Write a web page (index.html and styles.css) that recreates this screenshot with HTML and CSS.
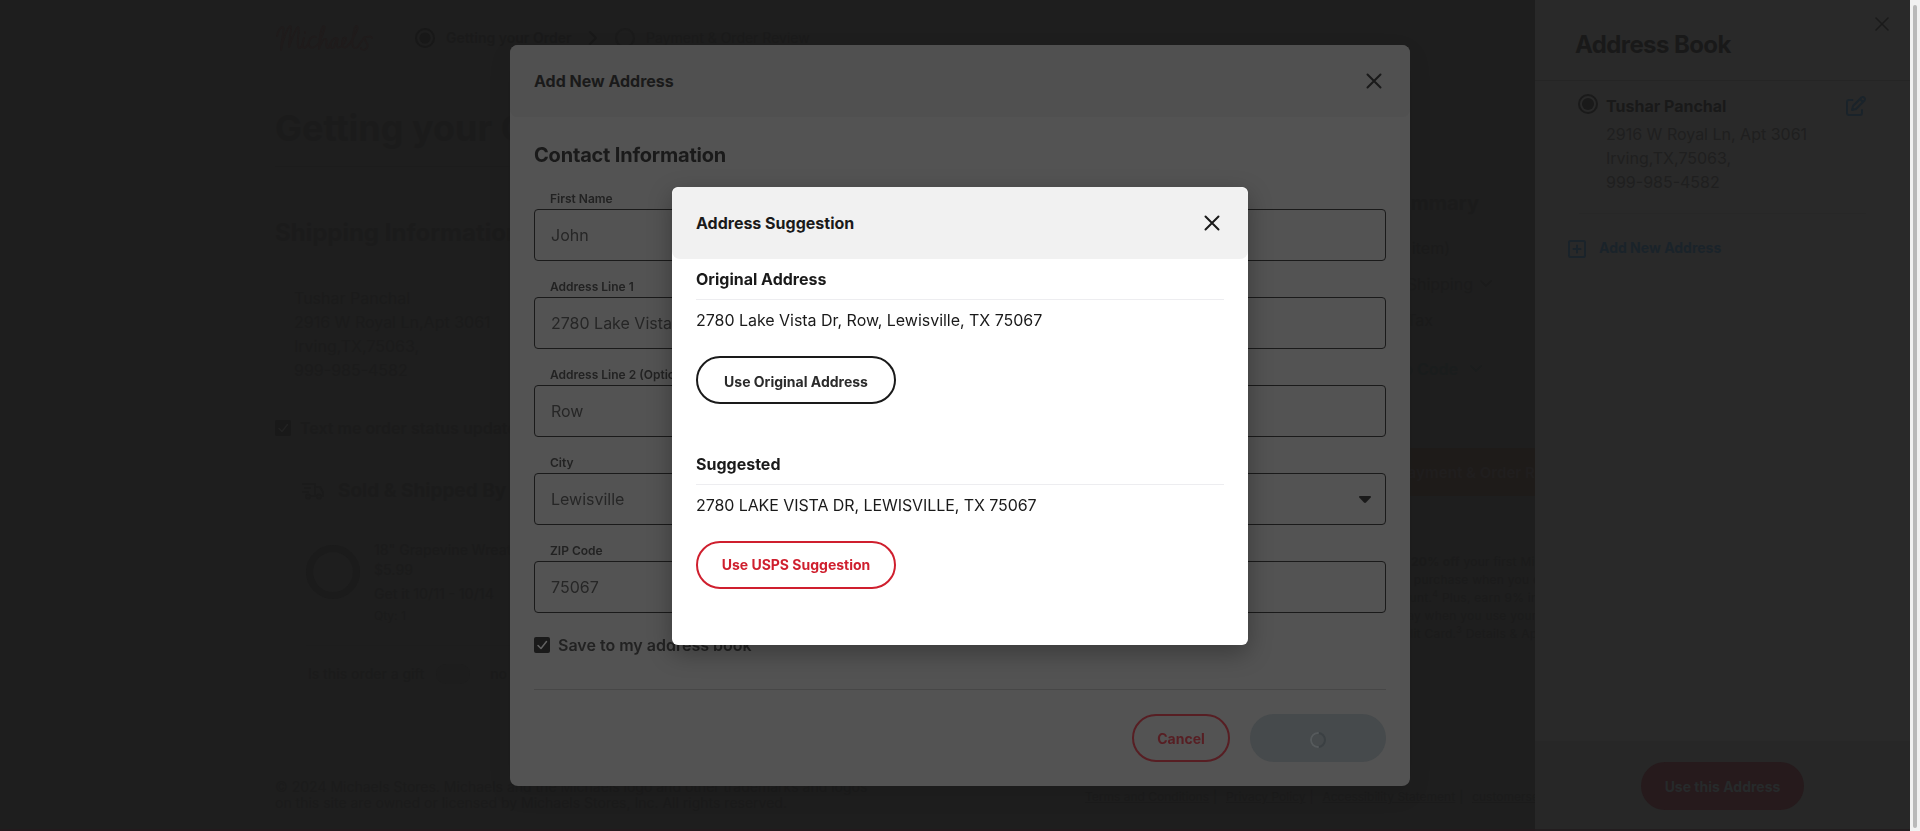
FILE: index.html
```html
<!DOCTYPE html>
<html lang="en">
<head>
<meta charset="utf-8">
<title>Michaels - Getting your Order</title>
<link rel="stylesheet" href="styles.css">
</head>
<body>
<div class="page">
  <header class="top">
    <svg class="logo" width="100" height="32" viewBox="0 0 100 32"><path d="M2 14C3 8 6 5 8 5C10 6 6 20 6 28C8 18 12 6 15 4C18 4 13 20 14 25C17 17 20 7 23 5C26 6 20 23 24 26C27 26 28 21 29 16C27 21 27 26 30 26C32 25 33 22 34 19M30 10V11M41 15C37 13 33 18 34 23C35 28 41 25 44 21C48 12 51 5 49 4C46 4 44 18 44 27C46 20 49 16 51 17C53 18 49 26 53 26C55 25 55 18 60 16C64 16 61 17 59 25C55 29 54 20 59 17M63 17C61 24 62 27 65 25C68 22 72 20 71 16C67 14 66 22 68 25C72 28 79 16 82 8C84 3 80 2 79 9C77 18 76 27 81 26C85 24 87 17 90 15C88 20 95 21 92 26C90 29 86 28 86 26M91 15C95 14 96 14 97 16"/></svg>
    <div class="step on"><svg width="20" height="20" viewBox="0 0 20 20"><circle cx="10" cy="10" r="9"/><circle class="solid" cx="10" cy="10" r="5.5"/></svg><span>Getting your Order</span></div>
    <svg class="next" width="10" height="16" viewBox="0 0 10 16"><path d="M2 2l6 6-6 6"/></svg>
    <div class="step"><svg width="20" height="20" viewBox="0 0 20 20"><circle cx="10" cy="10" r="9"/></svg><span>Payment &amp; Order Review</span></div>
  </header>
  <div class="columns">
    <main class="left">
      <h1>Getting your Order</h1>
      <h2>Shipping Information</h2>
      <div class="ship">Tushar Panchal<br>2916 W Royal Ln,Apt 3061<br>Irving,TX,75063,<br>999-985-4582</div>
      <div class="optin"><svg width="16" height="16" viewBox="0 0 16 16"><rect width="16" height="16" rx="2"/><path d="M4 8.500l3 3 5.500-7"/></svg><span>Text me order status updates</span></div>
      <div class="sold"><svg width="22" height="18" viewBox="0 0 22 18"><path d="M1 2h12v12H8M3 6h5M1 10h5M13 5h5l3 5v4h-2M15 14h-2"/><circle cx="6" cy="14.500" r="2"/><circle cx="17" cy="14.500" r="2"/></svg><span>Sold &amp; Shipped By</span></div>
      <div class="item"><div class="wreath"></div><div class="info"><b>18" Grapevine Wreath</b><b>$5.99</b><b class="get">Get it 10/11 - 10/14</b><small>Qty: 1</small></div></div>
      <div class="gift"><span>Is this order a gift</span><i class="toggle"></i><span>no</span></div>
    </main>
    <aside class="summary">
      <h3>Order Summary</h3>
      <div class="sum subtotal">Subtotal (1 item)</div>
      <div class="sum shipping">Estimated Shipping <svg width="12" height="8" viewBox="0 0 12 8"><path d="M1 1l5 5 5-5"/></svg></div>
      <div class="sum tax">Estimated Tax</div>
      <div class="sum promo">Add Promo Code <svg width="12" height="8" viewBox="0 0 12 8"><path d="M1 1l5 5 5-5"/></svg></div>
      <div class="pay">Payment &amp; Order Review</div>
      <div class="offer"><p><b>20% off</b> your first Michaels</p><p>Card purchase when you open</p><p>an account.<sup>4</sup> Plus, earn 9% in</p><p>every day when you use your</p><p>Credit Card.<sup>3</sup> <span>Details &amp; Apply</span></p></div>
    </aside>
  </div>
  <footer class="foot">
    <p>© 2024 Michaels Stores. Michaels and the Michaels logo and other trademarks and logos<br>on this site are owned or licensed by Michaels Stores, Inc. All rights reserved.</p>
    <nav><a>Terms and Conditions</a><i>|</i><a>Privacy Policy</a><i>|</i><a>Accessibility Statement</a><i>|</i><a>customerservice</a></nav>
  </footer>
</div>

<aside class="drawer">
  <div class="drawer-head"><h2>Address Book</h2><svg width="14" height="14" viewBox="0 0 14 14"><path d="M1 1l12 12M13 1L1 13"/></svg></div>
  <div class="entry">
    <svg class="radio" width="20" height="20" viewBox="0 0 20 20"><circle cx="10" cy="10" r="9"/><circle class="solid" cx="10" cy="10" r="6"/></svg>
    <div class="entry-text"><b>Tushar Panchal</b><span>2916 W Royal Ln, Apt 3061</span><span>Irving,TX,75063,</span><span>999-985-4582</span></div>
    <svg class="edit" width="20" height="20" viewBox="0 0 20 20"><path d="M6.500 4H3Q1 4 1 6v11q0 2 2 2h11q2 0 2-2v-3M6 14l1-4 8.500-8.500q1.500-1 2.800.2t.2 2.800L10 13zM14 3l3 3"/></svg>
  </div>
  <div class="add"><svg width="18" height="18" viewBox="0 0 18 18"><rect x="1" y="1" width="16" height="16" rx="1.500"/><path d="M9 5.500v7M5.500 9h7"/></svg><span>Add New Address</span></div>
  <div class="drawer-foot"><button>Use this Address</button></div>
</aside>

<section class="modal form-modal">
  <header><h2>Add New Address</h2><svg width="16" height="16" viewBox="0 0 16 16"><path d="M1.500 1.500l13 13M14.500 1.500l-13 13"/></svg></header>
  <div class="form">
    <h3>Contact Information</h3>
    <label>First Name</label><div class="input">John</div>
    <label>Address Line 1</label><div class="input">2780 Lake Vista</div>
    <label>Address Line 2 (Optional)</label><div class="input">Row</div>
    <label>City</label><div class="input select">Lewisville<svg width="12" height="7" viewBox="0 0 12 7"><path d="M1 0h10q1.500.3.700 1.400L7 6.500q-1 .8-2 0L.3 1.400Q-.5.300 1 0z"/></svg></div>
    <label>ZIP Code</label><div class="input">75067</div>
    <div class="save"><svg width="16" height="16" viewBox="0 0 16 16"><rect width="16" height="16" rx="2"/><path d="M4 8.500l3 3 5.500-7"/></svg><span>Save to my address book</span></div>
  </div>
  <div class="actions"><button class="cancel">Cancel</button><button class="busy"><svg width="18" height="18" viewBox="0 0 18 18"><circle cx="9" cy="9" r="7"/><path d="M9 2a7 7 0 0 0 0 14"/></svg></button></div>
</section>

<section class="modal suggest">
  <header><h2>Address Suggestion</h2><svg width="16" height="16" viewBox="0 0 16 16"><path d="M1.500 1.500l13 13M14.500 1.500l-13 13"/></svg></header>
  <div class="choice"><h3>Original Address</h3><p>2780 Lake Vista Dr, Row, Lewisville, TX 75067</p><button class="original">Use Original Address</button></div>
  <div class="choice second"><h3>Suggested</h3><p>2780 LAKE VISTA DR, LEWISVILLE, TX 75067</p><button class="usps">Use USPS Suggestion</button></div>
</section>
<div class="scrollbar"><i></i></div>
</body>
</html>
```
FILE: styles.css
```css
* { box-sizing: border-box; }
body { margin: 0; height: 831px; overflow: hidden; background: #1e1e1e; font: 16px/24px Inter, sans-serif; color: #1a1a1a; }
h1, h2, h3, p { margin: 0; }
svg { display: block; flex: none; fill: none; stroke: currentColor; stroke-width: 2; stroke-linecap: round; stroke-linejoin: round; }
button { font: 700 14px/20px Inter, sans-serif; border: 2px solid; border-radius: 24px; height: 48px; padding: 0; background: none; }
.solid { fill: currentColor; stroke: none; }

.page { width: 1910px; height: 831px; padding-left: 275px; border-bottom: 2px solid #231a1d; overflow: hidden; color: #1b1b1b; }
.top { display: flex; align-items: center; height: 76px; font-size: 14px; }
.logo { color: #1f1b1b; margin-right: 40px; stroke-width: 1.8; }
.step { display: flex; align-items: center; gap: 11px; white-space: nowrap; }
.step.on { font-weight: 600; color: #1a1a1a; width: 173px; }
.step.on svg { color: #181818; }
.next { margin-right: 17px; color: #191919; }
.columns { display: grid; grid-template-columns: 1035px 350px; height: 702px; }
h1 { font: 700 36px/44px Inter, sans-serif; padding-top: 30px; height: 91px; border-bottom: 1px solid #1c1c1c; }
.left { white-space: nowrap; }
.left h2 { font: 700 24px/32px Inter, sans-serif; margin-top: 50px; }
.ship { margin: 37px 0 0 19px; }
.optin { display: flex; align-items: center; gap: 9px; height: 24px; margin-top: 34px; font-weight: 600; }
.optin svg { color: #191919; }
.optin svg rect, .save rect { fill: currentColor; stroke: none; }
.optin path { stroke: #222; stroke-width: 1.5; }
.sold { display: flex; align-items: center; gap: 14px; margin: 37px 0 0 27px; font: 700 19px/28px Inter, sans-serif; }
.item { display: flex; gap: 14px; margin: 35px 0 0 31px; height: 106px; border-bottom: 1px solid #1d1d1d; font-size: 14px; }
.wreath { width: 54px; height: 54px; margin-top: 5px; border: 7px solid #1b1b1b; border-radius: 50%; }
.info { display: flex; flex-direction: column; line-height: 20px; }
.info b { font-weight: 500; }
.get { margin-top: 4px; }
.info small { font-size: 12px; margin-top: 2px; }
.gift { display: flex; align-items: center; gap: 12px; height: 24px; margin: 16px 0 0 33px; font-size: 14px; font-weight: 500; }
.toggle { width: 34px; height: 20px; border-radius: 10px; background: #1d1d1d; margin-right: 8px; }
.summary { padding-top: 113px; padding-left: 20px; width: 350px; }
.summary h3 { font: 700 20px/28px Inter, sans-serif; width: 149px; display: flex; justify-content: flex-end; white-space: nowrap; }
.sum { height: 36px; line-height: 36px; display: flex; align-items: center; justify-content: flex-end; gap: 7px; white-space: nowrap; }
.subtotal { width: 120px; margin-top: 13px; }
.shipping { width: 162px; }
.tax { width: 103px; }
.promo { width: 152px; gap: 12px; margin-top: 13px; font-weight: 600; color: #1a1d1d; }
.sum svg { stroke-width: 1.5; }
.pay { height: 48px; margin-top: 61px; background: #1e1b19; color: #201e1e; font: 700 15px/49px Inter, sans-serif; padding-left: 68px; white-space: nowrap; }
.offer { margin-top: 57px; padding-left: 33px; width: 300px; font-size: 12px; line-height: 18px; letter-spacing: .25px; }
.offer p { height: 18px; white-space: nowrap; }
.offer p:nth-child(1) { padding-left: 48px; }
.offer p:nth-child(2) { padding-left: 19px; }
.offer p:nth-child(5) { padding-left: 22px; }
.offer sup { font-size: 9px; line-height: 0; }
.foot { display: flex; font-size: 14px; line-height: 16px; white-space: nowrap; }
.foot p { width: 810px; padding-top: 1px; }
.foot nav { display: flex; font-size: 12px; padding-top: 11px; }
.foot a { text-decoration: underline; }
.foot i { font-style: normal; margin: 0 9px 0 4px; }

.drawer { position: fixed; left: 1535px; top: 0; width: 375px; height: 831px; background: #292929; display: flex; flex-direction: column; border-bottom: 2px solid #231d1f; }
.drawer-head { height: 81px; display: flex; justify-content: space-between; padding: 17px 21px 0 40px; border-bottom: 1px solid #252525; }
.drawer-head h2 { font: 700 24px/32px Inter, sans-serif; letter-spacing: -.6px; margin-top: 12px; color: #191919; }
.drawer-head svg { stroke-width: 1.5; }
.entry { display: flex; margin: 13px 44px 0; height: 120px; border-bottom: 1px solid #272727; }
.radio { margin-right: 8px; margin-left: -1px; }
.entry-text { flex: 1; display: flex; flex-direction: column; color: #1f1f1f; white-space: nowrap; }
.entry-text b { color: #191919; margin-bottom: 4px; line-height: 24px; }
.edit { color: #1a232a; margin-top: 2px; stroke-width: 1.9; }
.add { display: flex; gap: 13px; margin: 26px 0 0 33px; color: #1a232a; font: 700 14px/15px Inter, sans-serif; }
.drawer-foot { margin-top: auto; height: 88px; background: #272727; padding: 21px 0 0 106px; }
.drawer-foot button { width: 163px; border: 0; color: #262a2b; background: #261a1c; padding-top: 2px; }

.modal { position: fixed; }
.modal header { display: flex; align-items: center; justify-content: space-between; height: 72px; padding: 0 28px 0 24px; border-radius: 8px; }
.modal header h2 { font: 700 16px/24px Inter, sans-serif; }
.form-modal { left: 510px; top: 45px; width: 900px; height: 741px; background: #535353; border-radius: 8px; box-shadow: 0 8px 24px rgba(0,0,0,.08); }
.form-modal header { background: #505050; }
.form { margin: 0 24px; height: 573px; border-bottom: 1px solid #474747; display: flex; flex-direction: column; }
.form h3 { font: 700 20px/28px Inter, sans-serif; letter-spacing: -.2px; margin: 24px 0 16px; }
.form label { font-size: 12px; font-weight: 600; line-height: 16px; height: 24px; padding: 6px 0 0 16px; color: #222; }
.input { height: 52px; margin-bottom: 12px; border: 1px solid #1a1a1a; border-radius: 4px; padding: 0 14px 0 16px; display: flex; align-items: center; justify-content: space-between; color: #262626; }
.select svg { fill: #1a1a1a; stroke: none; }
.save { display: flex; align-items: center; gap: 8px; height: 24px; margin-top: 8px; font-weight: 600; color: #222; }
.save svg { color: #1a1a1a; }
.save path { stroke: #626262; stroke-width: 1.5; }
.actions { display: flex; justify-content: flex-end; gap: 20px; padding: 24px 24px 0; }
.cancel { width: 98px; color: #571e23; padding-top: 2px; }
.busy { width: 136px; border: 0; background: #464a4c; color: #3b4043; display: flex; align-items: center; justify-content: center; padding-top: 3px; }
.busy path { stroke: #565a5c; }

.suggest { left: 672px; top: 187px; width: 576px; height: 458px; border-radius: 6px; background: #fff; box-shadow: 0 8px 24px rgba(0,0,0,.3); }
.suggest header { background: #f1f1f1; }
.choice { padding: 8px 24px 0; height: 185px; }
.choice h3 { font: 700 16px/24px Inter, sans-serif; height: 33px; border-bottom: 1px solid #ededf0; }
.choice p { margin-top: 8px; letter-spacing: -.03px; }
.second p { letter-spacing: -.08px; }
.choice button { display: block; width: 200px; margin-top: 24px; }
.original { padding-top: 4px; color: #2b2b2b; border-color: #1a1a1a; }
.usps { color: #cf1f2e; padding-top: 0; }
.scrollbar { position: fixed; right: 0; top: 0; width: 10px; height: 831px; background: #f1f1f1; padding: 5px 3px 3px; }
.scrollbar i { display: block; height: 100%; width: 4px; background: #b9b9b9; border-radius: 2px; }
```
